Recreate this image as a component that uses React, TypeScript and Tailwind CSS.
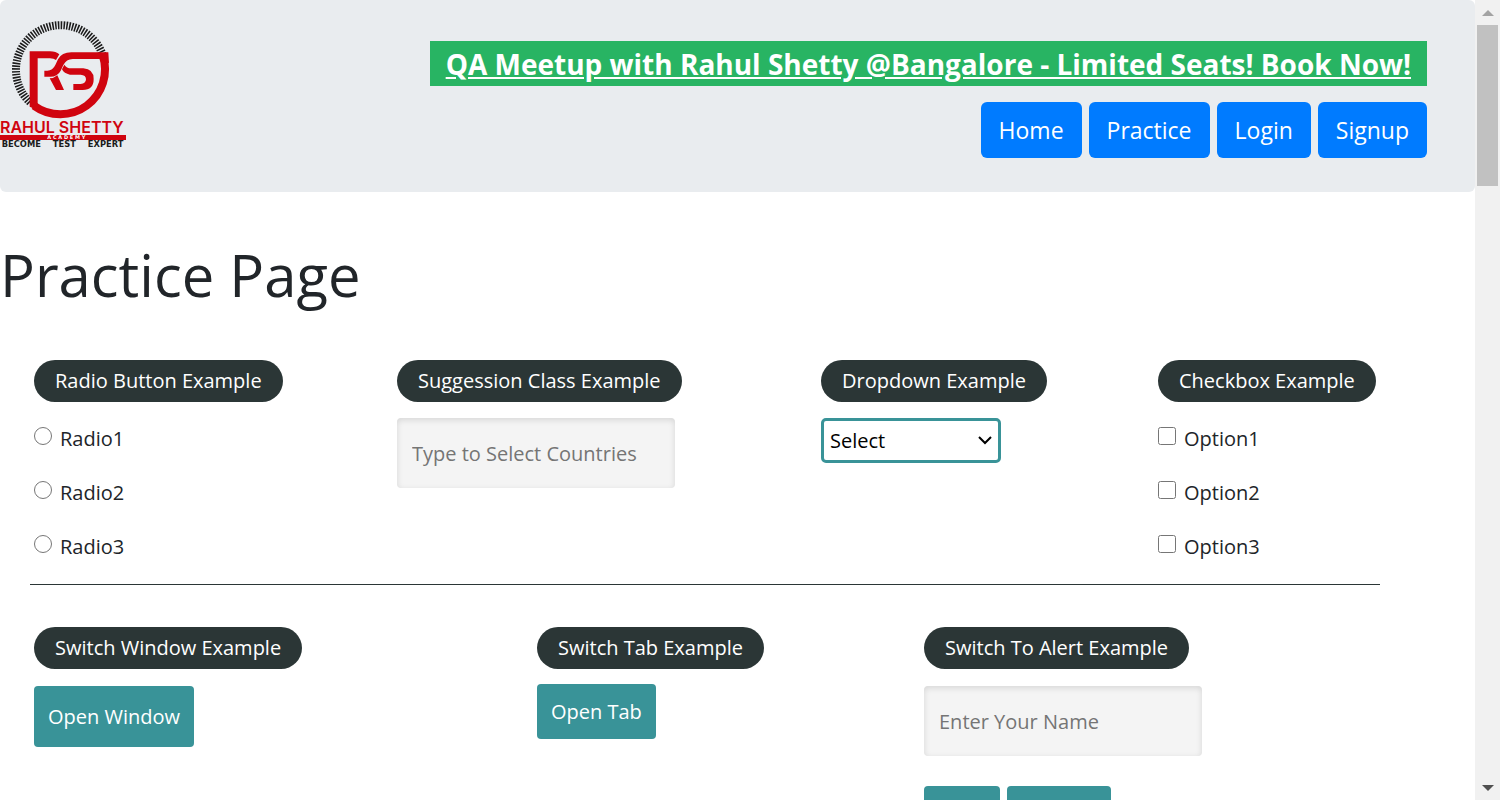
import type { ReactNode } from 'react';

const navItems = ['Home', 'Practice', 'Login', 'Signup'];
const radios = ['Radio1', 'Radio2', 'Radio3'];
const options = ['Option1', 'Option2', 'Option3'];

function Logo() {
  return (
    <svg viewBox="0 0 384 450" className="h-[150px] w-32" role="img" aria-label="Rahul Shetty Academy">
      <path d="M 90 307 A 134 134 0 1 1 309 167" fill="none" stroke="#1b1b1b" strokeWidth="24" strokeDasharray="4.6 3.8" />
      <path d="M 308 166 A 134 134 0 0 1 102 317" fill="none" stroke="#d0040f" strokeWidth="24" />
      <path d="M 89 154 H 150 Q 168 154 178 163 L 168 180 Q 162 175 150 175 H 113 V 308 L 116 332 L 89 320 Z" fill="#d0040f" />
      <path d="M 325 157 H 214 Q 185 157 174 178 L 166 195 Q 158 212 142 212 H 133 V 230 H 150 Q 173 230 182 212 L 190 195 Q 199 177 218 177 H 303 L 327 190 Z" fill="#d0040f" />
      <path d="M 149 235 Q 162 235 172 226 L 192 270 H 168 Z" fill="#d0040f" />
      <path d="M 193 194 Q 199 205 214 205 H 250 Q 281 207 281 237 Q 281 270 248 270 H 220 V 252 H 242 Q 258 250 258 238 Q 258 225 242 224 H 210 Q 192 221 186 208 Z" fill="#d0040f" />
      <text x="0" y="398" fontSize="48" fontWeight="600" fill="#d0040f" fontFamily="Inter, sans-serif">RAHUL SHETTY</text>
      <rect x="0" y="405" width="378" height="15" fill="#d0040f" />
      <text x="199" y="418" textAnchor="middle" fontSize="15" fontWeight="700" fill="#fff" fontFamily="DejaVu Sans, sans-serif">A C A D E M Y</text>
      <g fontSize="25" fontWeight="700" fill="#1b1b1b" fontFamily="DejaVu Sans, sans-serif">
        <text x="64" y="441" textAnchor="middle">BECOME</text>
        <text x="193" y="441" textAnchor="middle">TEST</text>
        <text x="317" y="441" textAnchor="middle">EXPERT</text>
      </g>
    </svg>
  );
}

function Legend({ children }: { children: ReactNode }) {
  return (
    <legend className="flex h-[42px] items-center rounded-full bg-[#2b3636] px-[21px] font-medium whitespace-nowrap text-white">
      {children}
    </legend>
  );
}

function Choice({ type, label }: { type: 'radio' | 'checkbox'; label: string }) {
  return (
    <label className="flex items-start gap-2 leading-6">
      <input type={type} name={type === 'radio' ? 'radioButton' : label} className="size-[18px]" />
      {label}
    </label>
  );
}

function TextBox({ label }: { label: string }) {
  return (
    <input
      type="text"
      aria-label={label}
      placeholder={label}
      className="h-[70px] w-[278px] rounded bg-[#f4f4f4] px-[15px] shadow-[inset_0_2px_6px_rgba(0,0,0,0.12)] placeholder:text-[#757575]"
    />
  );
}

function Scrollbar() {
  return (
    <aside aria-hidden="true" className="flex w-[25px] shrink-0 flex-col items-center bg-[#f1f1f1]">
      <div className="flex h-[25px] items-center">
        <svg viewBox="0 0 12 6" className="h-1.5 w-3"><path d="M6 0 12 6H0Z" fill="#a3a3a3" /></svg>
      </div>
      <div className="h-[161px] w-[21px] bg-[#c1c1c1]" />
      <div className="mt-auto flex h-[25px] items-center">
        <svg viewBox="0 0 12 6" className="h-1.5 w-3"><path d="M0 0H12L6 6Z" fill="#505050" /></svg>
      </div>
    </aside>
  );
}

export default function App() {
  return (
    <div className="flex h-screen overflow-hidden bg-white font-['Trebuchet_MS','Open_Sans',sans-serif] text-xl text-[#212529]">
      <div className="min-w-0 flex-1 overflow-hidden">
        <header className="flex h-48 items-start justify-between rounded-md bg-[#e9ecef] pr-12">
          <Logo />
          <div className="flex flex-col items-end gap-4 pt-[41px]">
            <a href="#meetup" className="flex h-[45px] items-center bg-[#28b463] px-4 text-[28px] leading-none font-bold whitespace-nowrap text-white underline">
              QA Meetup with Rahul Shetty @Bangalore - Limited Seats! Book Now!
            </a>
            <nav className="flex gap-[7px]">
              {navItems.map((item) => (
                <button key={item} type="button" className="h-14 rounded-md bg-[#007bff] px-[18px] text-[23px] text-white">
                  {item}
                </button>
              ))}
            </nav>
          </div>
        </header>

        <main>
          <h1 className="mt-[47px] text-[58px] leading-[72px]">Practice Page</h1>
          <div className="mt-[49px] mr-[95px] ml-[30px]">
            <section className="grid grid-cols-[363fr_424fr_337fr_222fr] border-b border-[#2b3636] pb-[25px] pl-1">
              <fieldset className="flex flex-col items-start">
                <Legend>Radio Button Example</Legend>
                <div className="mt-[25px] flex flex-col gap-[30px]">
                  {radios.map((r) => <Choice key={r} type="radio" label={r} />)}
                </div>
              </fieldset>
              <fieldset className="flex flex-col items-start">
                <Legend>Suggession Class Example</Legend>
                <div className="mt-4"><TextBox label="Type to Select Countries" /></div>
              </fieldset>
              <fieldset className="flex flex-col items-start">
                <Legend>Dropdown Example</Legend>
                <div className="relative mt-4">
                  <select aria-label="Dropdown Example" className="block h-[45px] w-[180px] appearance-none rounded-[5px] border-[3px] border-[#399398] bg-white px-1.5 text-black">
                    <option>Select</option>
                    <option>Option1</option>
                    <option>Option2</option>
                    <option>Option3</option>
                  </select>
                  <svg viewBox="0 0 14 9" className="pointer-events-none absolute top-[18px] right-[9px] h-[9px] w-3.5">
                    <path d="M1 1 7 7 13 1" fill="none" stroke="#000" strokeWidth="2" />
                  </svg>
                </div>
              </fieldset>
              <fieldset className="flex flex-col items-start">
                <Legend>Checkbox Example</Legend>
                <div className="mt-[25px] flex flex-col gap-[30px]">
                  {options.map((o) => <Choice key={o} type="checkbox" label={o} />)}
                </div>
              </fieldset>
            </section>

            <section className="mt-[42px] grid grid-cols-[503fr_387fr_456fr] pl-1">
              <fieldset className="flex flex-col items-start">
                <Legend>Switch Window Example</Legend>
                <button type="button" className="mt-[17px] h-[61px] rounded bg-[#399398] px-3.5 font-medium text-white">Open Window</button>
              </fieldset>
              <fieldset className="flex flex-col items-start">
                <Legend>Switch Tab Example</Legend>
                <a href="#tab" className="mt-[15px] flex h-[55px] items-center rounded bg-[#399398] px-3.5 font-medium text-white">Open Tab</a>
              </fieldset>
              <fieldset className="flex flex-col items-start">
                <Legend>Switch To Alert Example</Legend>
                <div className="mt-[17px]"><TextBox label="Enter Your Name" /></div>
                <div className="mt-[30px] flex gap-[7px]">
                  <button type="button" aria-label="Alert" className="h-[61px] w-[76px] rounded bg-[#399398]" />
                  <button type="button" aria-label="Confirm" className="h-[61px] w-[104px] rounded bg-[#399398]" />
                </div>
              </fieldset>
            </section>
          </div>
        </main>
      </div>
      <Scrollbar />
    </div>
  );
}
